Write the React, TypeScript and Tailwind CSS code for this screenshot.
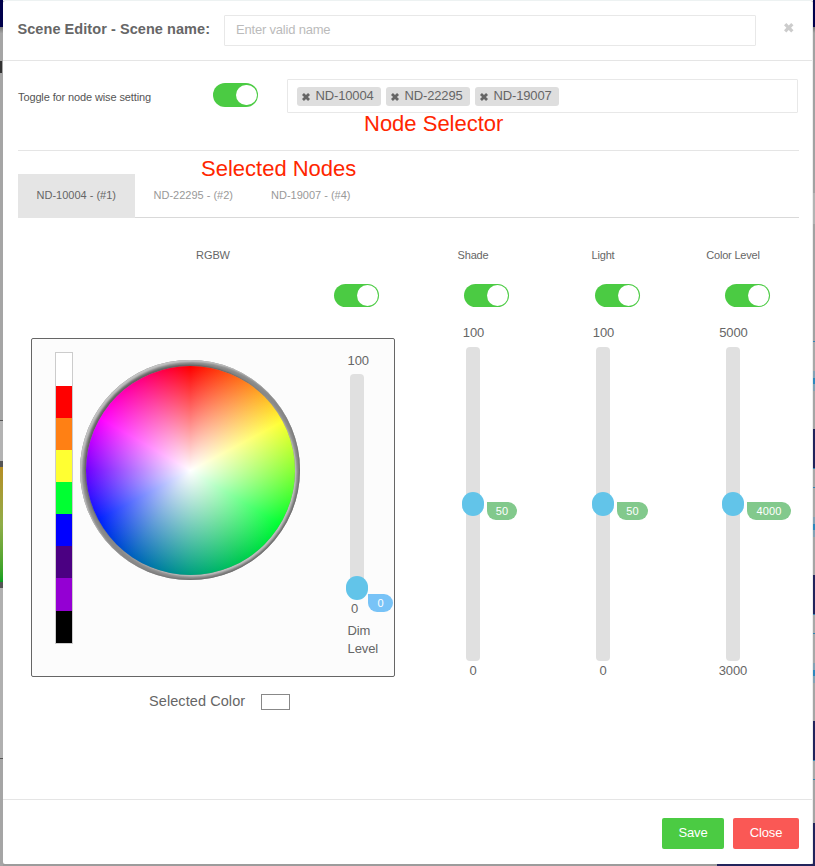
import React from "react";

const swatches = [
  "h-[33px] bg-white",
  "h-[32px] bg-[#ff0000]",
  "h-[32px] bg-[#ff8014]",
  "h-[32px] bg-[#ffff32]",
  "h-[32px] bg-[#00ff32]",
  "h-[32px] bg-[#0000ff]",
  "h-[32px] bg-[#4b0082]",
  "h-[33px] bg-[#9400d3]",
  "h-[32px] bg-black",
];

const channels = [
  { name: "Shade", max: "100", min: "0", value: "50", pill: "w-[30px]", toggle: "ml-[56px]" },
  { name: "Light", max: "100", min: "0", value: "50", pill: "w-[31px]", toggle: "ml-[57px]" },
  { name: "Color Level", max: "5000", min: "3000", value: "4000", pill: "w-[44px]", toggle: "ml-[57px]" },
];

const leftEdge = [
  "h-[27px] bg-[#00004b]",
  "h-[6px] bg-linear-to-b from-[#777] to-[#a2a2a2]",
  "h-[28px] bg-[#a5a5a5]",
  "h-[12px] w-[2px] bg-[#333]",
  "h-[347px] bg-[#a5a5a5]",
  "h-px bg-[#555]",
  "h-[40px] bg-[#b3b3b3]",
  "h-[6px] bg-[#555]",
  "h-[115px] bg-linear-to-b from-[#b58e24] via-[#8fad48] to-[#00a020]",
  "h-[6px] bg-[#555]",
  "h-[170px] bg-[#b0b0b0]",
  "h-px bg-[#555]",
  "h-[107px] bg-[#a5a5a5]",
];

const rightEdge = [
  "h-[27px] bg-[#00004b]",
  "h-[6px] bg-linear-to-b from-[#777] to-[#a2a2a2]",
  "h-[160px] bg-[#a2a2a2]",
  "h-[31px] bg-[#b3b3b3]",
  "h-[117px] bg-[#a2a2a2]",
  "h-px bg-[#3284b4]",
  "h-[29px] bg-[#a8a8a8]",
  "h-[7px] bg-[#83a2b5]",
  "h-[6px] bg-[#2f88bd]",
  "h-[7px] bg-[#83a2b5]",
  "h-[38px] bg-[#a5a5a5]",
  "h-[39px] bg-[#22245c]",
  "h-px bg-[#3284b4]",
  "h-[18px] bg-[#a8a8a8]",
  "h-px bg-[#3284b4]",
  "h-[29px] bg-[#a8a8a8]",
  "h-[7px] bg-[#83a2b5]",
  "h-[6px] bg-[#2f88bd]",
  "h-[7px] bg-[#83a2b5]",
  "h-[38px] bg-[#a5a5a5]",
  "h-[39px] bg-[#22245c]",
  "h-px bg-[#3284b4]",
  "h-[18px] bg-[#a8a8a8]",
  "h-px bg-[#3284b4]",
  "h-[29px] bg-[#a8a8a8]",
  "h-[7px] bg-[#83a2b5]",
  "h-[6px] bg-[#2f88bd]",
  "h-[7px] bg-[#83a2b5]",
  "h-[38px] bg-[#a5a5a5]",
  "h-[39px] bg-[#22245c]",
  "h-px bg-[#3284b4]",
  "h-[18px] bg-[#a8a8a8]",
  "h-px bg-[#3284b4]",
  "h-[43px] bg-[#a5a5a5]",
  "h-[43px] bg-[#22245c]",
];

function Edge({ bands }: { bands: string[] }) {
  return (
    <div className="flex flex-1 flex-col overflow-hidden">
      {bands.map((b, i) => (
        <div key={i} className={`shrink-0 ${b}`} />
      ))}
    </div>
  );
}

function Toggle({ tall = false }: { tall?: boolean }) {
  return (
    <div
      className={`flex w-[45px] shrink-0 items-center justify-end rounded-full bg-[#4bcb43] pr-[1.5px] ${tall ? "h-6" : "h-[23px]"}`}
    >
      <div className="size-[20.5px] rounded-full bg-white" />
    </div>
  );
}

function Cross({ className }: { className: string }) {
  return (
    <svg viewBox="0.5 0.5 9 9" className={`shrink-0 ${className}`} fill="currentColor">
      <path d="M2.7.5 5 2.8 7.3.5 9.5 2.7 7.2 5l2.3 2.3-2.2 2.2L5 7.2 2.7 9.5.5 7.3 2.8 5 .5 2.7z" />
    </svg>
  );
}

function Chip({ label }: { label: string }) {
  return (
    <div className="flex h-[19px] w-[84px] items-center rounded-[3px] bg-[#dedede] pl-[5px] text-[13px] tracking-[-0.15px] text-[#666]">
      <Cross className="mr-[5.5px] size-2" />
      <span className="-mt-px whitespace-nowrap">{label}</span>
    </div>
  );
}

function ColorWheel() {
  return (
    <div className="ml-[7px] mt-[21px] flex size-[220px] items-center justify-center overflow-hidden rounded-full bg-[#8a8a8a] shadow-[inset_2px_2px_2px_#c4c4c4,inset_-1px_-1px_2px_#6c6c6c]">
      <div className="size-[209px] rounded-full bg-[radial-gradient(closest-side,#fff,rgba(255,255,255,0)_99%),conic-gradient(#ff0000,#ff8020_32deg,#ffff32_62deg,#7fff32_92deg,#00ff32_121deg,#00cc50_150deg,#00a080_180deg,#0060c0_215deg,#0020ff_242deg,#7000ff_270deg,#ff00ff_300deg,#ff0080_332deg,#ff0000)] shadow-[-1.5px_-1.5px_2px_#606060,1.5px_1.5px_2px_#c4c4c4]" />
    </div>
  );
}

export default function App() {
  return (
    <div className="relative flex h-[866px] w-[815px] overflow-hidden bg-[#a5a5a5] font-['Liberation_Sans',Arial,sans-serif] text-[#666]">
      <div className="flex w-[3px] shrink-0">
        <Edge bands={leftEdge} />
      </div>

      <div className="flex w-[810px] shrink-0 flex-col">
        <div className="h-px bg-[#edf2f2]" />
        <div className="relative flex h-[863px] flex-col rounded-[2px] border-r border-[#eee] bg-white">
          <header className="flex h-[60px] shrink-0 items-start border-b border-[#e5e5e5] pl-[14.5px] pt-[14px]">
            <h1 className="w-[206.5px] whitespace-nowrap text-[14.5px] leading-[29px] font-bold tracking-[0.06px]">
              Scene Editor - Scene name:
            </h1>
            <div className="h-[31px] w-[532px] rounded-[1px] border border-[#e8e8e8] pl-[11px] text-[13px] leading-[28px] tracking-[-0.2px] text-[#bbb]">
              Enter valid name
            </div>
            <Cross className="ml-[28px] mt-[8px] size-[9.5px] text-[#ccc]" />
          </header>

          <section className="ml-[15px] flex h-[90px] w-[781px] shrink-0 items-start border-b border-[#e5e5e5] pt-[18px]">
            <div className="w-[195px] shrink-0 whitespace-nowrap text-[11px] leading-[37px] tracking-[-0.12px] text-[#555]">
              Toggle for node wise setting
            </div>
            <div className="w-[74px] shrink-0 pt-1">
              <Toggle tall />
            </div>
            <div className="flex h-[34px] w-[511px] shrink-0 gap-[5px] rounded-[1px] border border-[#e8e8e8] pl-[9px] pt-[7px]">
              <Chip label="ND-10004" />
              <Chip label="ND-22295" />
              <Chip label="ND-19007" />
            </div>
          </section>

          <nav className="ml-[15px] mt-[23px] flex h-[44px] w-[781px] shrink-0 border-b border-[#d9d9d9] text-[11px] leading-[43px] text-[#999]">
            <div className="h-[44px] w-[117px] bg-[#e5e5e5] pl-[18.5px] text-[#666]">ND-10004 - (#1)</div>
            <div className="w-[117.5px] pl-[18.5px]">ND-22295 - (#2)</div>
            <div className="w-[117.5px] pl-[18.5px]">ND-19007 - (#4)</div>
          </nav>

          <main className="flex h-[582px] shrink-0 border-b border-[#e5e5e5] pl-[15px]">
            <section className="w-[390px]">
              <div className="pt-[30px] text-center text-[11px] leading-[15px] tracking-[-0.1px]">RGBW</div>
              <div className="ml-[316px] mt-[21px]">
                <Toggle />
              </div>
              <div className="ml-[13px] mt-[31px] flex h-[339px] w-[364px] rounded-[2px] border border-[#666] bg-[#fcfcfc]">
                <div className="ml-[23px] mt-[13px] h-[292px] w-[18px] border border-[#ccc]">
                  {swatches.map((s) => (
                    <div key={s} className={s} />
                  ))}
                </div>
                <ColorWheel />
                <div className="relative ml-[47px] mt-[14px] w-[32px] text-[13px] leading-[16px]">
                  <div className="pl-[0.5px] tracking-[-0.1px]">100</div>
                  <div className="ml-[3px] mt-[5px] h-[214px] w-[14px] rounded-[4px] bg-[#e0e0e0]" />
                  <div className="-ml-px -mt-[12px] h-[24px] w-[22px] rounded-full bg-[#62c4e9]" />
                  <div className="mt-px pl-[4px]">0</div>
                  <div className="absolute left-[21px] top-[241px] h-[18px] w-[25px] rounded-[9px] rounded-tl-none bg-[#78c3f7] text-center text-[11px] leading-[18px] text-white">
                    0
                  </div>
                  <div className="mt-[5px] pl-[0.5px] leading-[18px] tracking-[-0.1px]">
                    Dim
                    <br />
                    Level
                  </div>
                </div>
              </div>
              <div className="ml-[131px] mt-[15px] flex items-start">
                <span className="w-[112px] whitespace-nowrap text-[14.5px] leading-[18px] tracking-[0.08px]">
                  Selected Color
                </span>
                <div className="mt-[2px] h-4 w-[29px] border border-[#888] bg-white" />
              </div>
            </section>

            {channels.map((c) => (
              <section key={c.name} className="w-[130px] text-center text-[13px]">
                <div className="pt-[30px] text-[11px] leading-[15px] tracking-[-0.2px]">{c.name}</div>
                <div className={`mt-[21px] ${c.toggle}`}>
                  <Toggle />
                </div>
                <div className="mt-[18px] pl-px leading-[16px] tracking-[-0.1px]">{c.max}</div>
                <div className="relative mx-auto mt-[6px] h-[314px] w-[14px] rounded-[4px] bg-[#e0e0e0]">
                  <div className="absolute -left-1 top-[145px] h-[24px] w-[22px] rounded-full bg-[#62c4e9]" />
                  <div
                    className={`absolute left-[21px] top-[155px] h-[18px] rounded-[9px] rounded-tl-none bg-[#82c98c] text-[11px] leading-[18px] tracking-[0.1px] text-white ${c.pill}`}
                  >
                    {c.value}
                  </div>
                </div>
                <div className="mt-[2px] leading-[16px] tracking-[-0.1px]">{c.min}</div>
              </section>
            ))}
          </main>

          <footer className="flex justify-end gap-[9px] pr-[13px] pt-[18px] text-center text-[13px] leading-[29px] text-white">
            <button className="h-[31px] w-[62px] rounded-[2px] bg-[#4bcb43] pb-0.5 tracking-[-0.1px]">Save</button>
            <button className="h-[31px] w-[66px] rounded-[2px] bg-[#fa5855] pb-0.5 tracking-[-0.1px]">Close</button>
          </footer>

          <div className="absolute left-[361px] top-[109px] whitespace-nowrap text-[22px] leading-[28px] text-[#ff2600]">
            Node Selector
          </div>
          <div className="absolute left-[198px] top-[154px] whitespace-nowrap text-[22px] leading-[28px] text-[#ff2600]">
            Selected Nodes
          </div>
        </div>
        <div className="flex h-[2px]">
          <div className="w-[714px] bg-[#9c9c9c]" />
          <div className="flex-1 bg-[#22245c]" />
        </div>
      </div>

      <div className="flex flex-1">
        <Edge bands={rightEdge} />
      </div>
    </div>
  );
}
